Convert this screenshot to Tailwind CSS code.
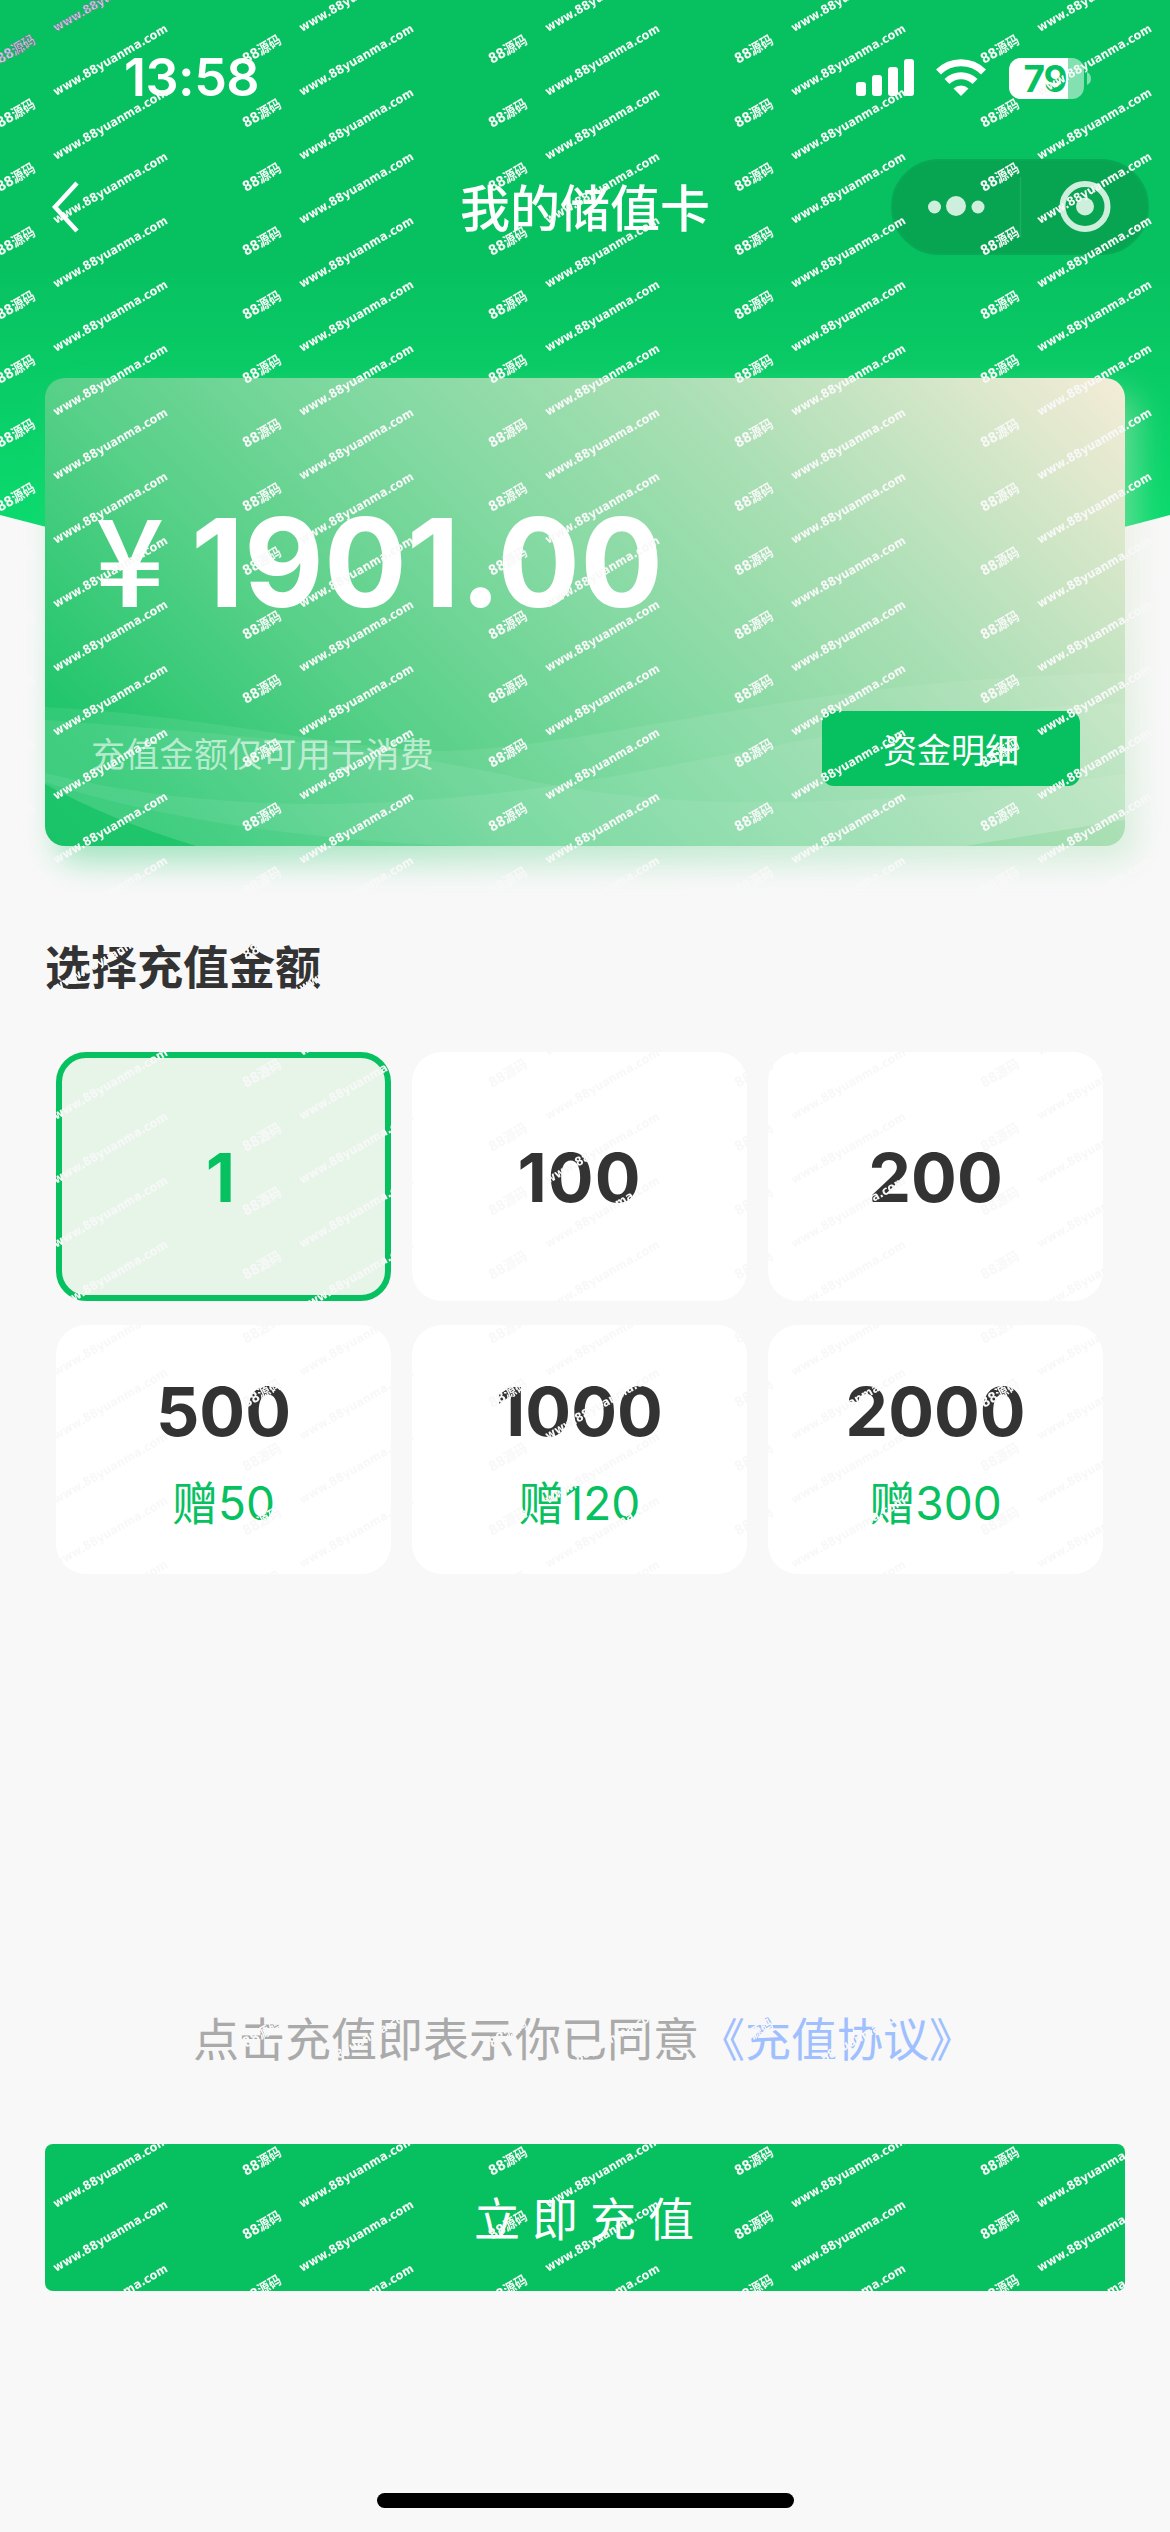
<!DOCTYPE html>
<html lang="zh-CN">
<head>
    <meta charset="UTF-8">
    <meta name="viewport" content="width=device-width, initial-scale=1.0">
    <title>我的储值卡</title>
    <script src="https://cdn.jsdelivr.net/npm/@tailwindcss/browser@4"></script>
</head>
<body class="bg-[#f8f8f8] font-['Inter','Noto_Sans_CJK_SC',sans-serif] text-[#333333]">
    <div class="relative w-[1170px] h-[2532px] overflow-hidden flex flex-col">

        <!-- green header background -->
        <svg class="absolute left-0 top-0" width="1170" height="600" viewBox="0 0 1170 600">
            <defs>
                <linearGradient id="head" x1="0" y1="0" x2="0" y2="1">
                    <stop offset="0" stop-color="#07c160"/>
                    <stop offset=".45" stop-color="#07c160"/>
                    <stop offset="1" stop-color="#0ce172"/>
                </linearGradient>
            </defs>
            <path d="M0 0H1170V515Q585 675 0 515Z" fill="url(#head)"/>
        </svg>

        <!-- status bar -->
        <div class="relative h-[156px] flex items-center justify-between pl-[124px] pr-[79px] text-white">
            <span class="text-[52px] leading-none font-semibold tracking-[-0.5px]">13:58</span>
            <div class="flex items-center gap-[22px]">
                <svg class="-mr-0.5" width="60" height="40" viewBox="0 0 60 40" fill="#fff">
                    <rect x="1" y="24" width="10" height="14" rx="3"/>
                    <rect x="17" y="17" width="10" height="21" rx="3"/>
                    <rect x="33" y="9" width="10" height="29" rx="3"/>
                    <rect x="49" y="1" width="10" height="37" rx="3"/>
                </svg>
                <svg width="52" height="40" viewBox="0 0 52 40" fill="none" stroke="#fff" stroke-width="7">
                    <path d="M3.500 14A32 32 0 0 1 48.500 14"/>
                    <path d="M12 23.500A20 20 0 0 1 40 23.500"/>
                    <path d="M26 38L18.500 30.500A11 11 0 0 1 33.500 30.500Z" fill="#fff" stroke="none"/>
                </svg>
                <svg width="82" height="41" viewBox="0 0 82 41">
                    <defs><clipPath id="bat"><rect width="75" height="41" rx="12"/></clipPath></defs>
                    <g clip-path="url(#bat)">
                        <rect width="75" height="41" fill="#fff" fill-opacity=".5"/>
                        <rect width="59" height="41" fill="#fff"/>
                    </g>
                    <path d="M78 14Q82 16 82 20.500T78 27Z" fill="#fff" fill-opacity=".5"/>
                    <text x="36" y="34" text-anchor="middle" font-size="37" font-weight="700" letter-spacing="-1" fill="#07c160">79</text>
                </svg>
            </div>
        </div>

        <!-- nav bar -->
        <div class="relative h-[102px] flex items-center justify-center text-white">
            <svg class="absolute left-[49px] top-[24px]" width="32" height="54" viewBox="0 0 32 54" fill="none" stroke="#fff" stroke-width="4.500">
                <path d="M28 3L6 27L28 51"/>
            </svg>
            <h1 class="pt-1 text-[50px] leading-none font-medium">我的储值卡</h1>
            <div class="absolute left-[891px] top-[3px] w-[258px] h-24 rounded-full bg-[#07a552] border-2 border-[#08a955]">
                <svg class="absolute -left-0.5 -top-0.5" width="258" height="96" viewBox="0 0 258 96">
                    <g fill="#cdefdc">
                        <circle cx="43.500" cy="48" r="6.500"/>
                        <circle cx="65" cy="47" r="10"/>
                        <circle cx="87" cy="48" r="6.500"/>
                        <circle cx="194" cy="47.500" r="9"/>
                    </g>
                    <circle cx="194" cy="47.500" r="22.500" fill="none" stroke="#cdefdc" stroke-width="6"/>
                    <path d="M129.500 18V78" stroke="#1cae62" stroke-width="1.500"/>
                </svg>
            </div>
        </div>

        <!-- balance card -->
        <section class="relative mt-[120px] mx-[45px] h-[468px] shrink-0">
            <div class="absolute left-3 top-4 w-full h-full rounded-[20px] opacity-40 blur-[16px] bg-[linear-gradient(45deg,#18c368_0%,#22c66c_10%,#57d088_30%,#82d9a1_50%,#aadfb4_70%,#f5ecd8_100%)]"></div>
            <div class="relative h-full rounded-[20px] overflow-hidden text-white bg-[linear-gradient(45deg,#18c368_0%,#22c66c_10%,#57d088_30%,#82d9a1_50%,#aadfb4_70%,#f5ecd8_100%)]">
                <svg class="absolute left-0 top-0" width="1080" height="468" viewBox="0 0 1080 468" fill="#fff" fill-opacity=".08">
                    <path d="M0 329C170 338 300 373 400 373C560 368 760 300 1080 295V442L920 468H151Q60 440 0 406Z"/>
                    <path d="M0 342C134 352 330 366 482 402C640 435 820 430 1080 396V442L920 468H151Q60 440 0 406Z"/>
                    <path d="M0 395C150 432 340 440 586 395C740 366 900 330 1080 325V442L920 468H412C260 462 110 440 0 404Z"/>
                </svg>
                <div class="relative h-full pl-[46px] pr-[45px]">
                    <div class="pt-[115px] flex items-baseline leading-none font-bold">
                        <span class="w-[100px] pl-1 text-[122px] font-['Noto_Sans_CJK_SC'] font-medium"><span class="inline-block h-[120px] leading-[120px]">¥</span></span>
                        <span class="text-[123px]">1901.00</span>
                    </div>
                    <div class="absolute left-[46px] right-[45px] top-[333px] flex items-center justify-between">
                        <span class="pt-3 text-[34px] tracking-[0.3px] text-white/60">充值金额仅可用于消费</span>
                        <button class="w-[258px] h-[75px] pt-1 rounded-[12px] bg-[#07c160] text-[34px]">资金明细</button>
                    </div>
                </div>
            </div>
        </section>

        <h2 class="relative mt-[98px] ml-[45px] text-[46px] leading-none font-bold">选择充值金额</h2>

        <!-- amounts -->
        <div class="relative mt-[62px] ml-14 grid grid-cols-[335px_335px_335px] auto-rows-[249px] gap-x-[21px] gap-y-6 text-[68px] font-bold leading-none">
            <div class="flex items-center justify-center rounded-[30px] border-6 border-[#07c160] bg-[#e7f5e9] pr-1.5 text-[#07c160]">1</div>
            <div class="flex items-center justify-center rounded-[30px] bg-white tracking-[1px]">100</div>
            <div class="flex items-center justify-center rounded-[30px] bg-white">200</div>
            <div class="flex flex-col items-center pt-[52px] gap-[35px] rounded-[30px] bg-white">500<span class="text-[46px] font-normal text-[#07c160]">赠50</span></div>
            <div class="flex flex-col items-center pt-[52px] gap-[35px] rounded-[30px] bg-white">1000<span class="text-[46px] font-normal text-[#07c160]">赠120</span></div>
            <div class="flex flex-col items-center pt-[52px] gap-[35px] rounded-[30px] bg-white">2000<span class="text-[46px] font-normal text-[#07c160]">赠300</span></div>
        </div>

        <p class="relative mt-[442px] ml-[193px] text-[46px] leading-none text-[#aaaaaa]">点击充值即表示你已同意<a class="text-[#a0bfff]">《充值协议》</a></p>

        <button class="relative mt-[82px] mx-[45px] h-[147px] shrink-0 rounded-[8px] bg-[#07c160] pl-2.5 pt-1 text-white text-[46px] tracking-[12px]">立即充值</button>

        <div class="absolute left-[377px] top-[2493px] w-[417px] h-[15px] rounded-full bg-black"></div>

        <!-- tiled site mark -->
        <svg class="absolute left-0 top-0 pointer-events-none font-['DejaVu_Sans','Noto_Sans_CJK_SC',sans-serif]" width="1170" height="2300" font-weight="700" font-size="12">
            <defs>
                <pattern id="mark" x="40" y="33" width="246" height="64" patternUnits="userSpaceOnUse">
                    <g fill="#f8f8f8">
                        <text transform="translate(16 63) rotate(-30)" textLength="130" lengthAdjust="spacingAndGlyphs">www.88yuanma.com</text>
                        <text transform="translate(16 127) rotate(-30)" textLength="130" lengthAdjust="spacingAndGlyphs">www.88yuanma.com</text>
                        <text transform="translate(206 31) rotate(-30)" textLength="42" font-size="14" lengthAdjust="spacingAndGlyphs">88源码</text>
                    </g>
                </pattern>
            </defs>
            <rect width="1170" height="2300" fill="url(#mark)"/>
            <g fill="#ccd0ee" stroke="#44505a" stroke-width=".4">
                <text transform="translate(56 32) rotate(-30)" textLength="130" lengthAdjust="spacingAndGlyphs">www.88yuanma.com</text>
                <text transform="translate(0 64) rotate(-30)" textLength="42" font-size="14" lengthAdjust="spacingAndGlyphs">88源码</text>
            </g>
        </svg>
    </div>
</body>
</html>
